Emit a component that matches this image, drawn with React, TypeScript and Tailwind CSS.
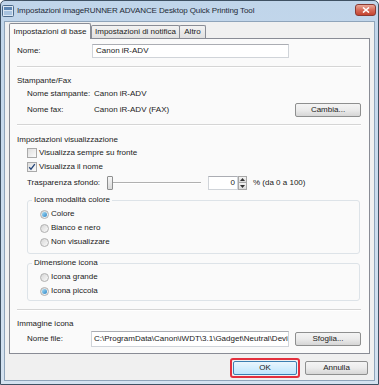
import React from "react";

const Sep = () => (
  <div className="h-[2px] border-t border-[#d5d5d5] border-b border-b-white" />
);

const Btn = ({ label, w, primary }: { label: string; w: string; primary?: boolean }) => (
  <div
    className={`${w} h-[14px] flex items-center justify-center rounded-[2px] border ${
      primary
        ? "border-[#3c7fb1] bg-gradient-to-b from-[#eaf6fd] to-[#bee6fd]"
        : "border-[#8e8f8f] bg-gradient-to-b from-[#f4f4f4] via-[#ebebeb] to-[#d6d6d6]"
    }`}
  >
    {label}
  </div>
);

const Check = ({ checked, label }: { checked?: boolean; label: string }) => (
  <div className="h-[12px] flex items-center">
    <div className="w-[10px] h-[10px] border border-[#a9a9a9] bg-gradient-to-br from-[#dedede] to-[#fbfbfb] flex items-center justify-center">
      {checked && (
        <svg width="8" height="8" viewBox="0 0 8 8">
          <path d="M1.2 4.2 L3 6.2 L6.8 1.2" stroke="#25467a" strokeWidth="1.3" fill="none" />
        </svg>
      )}
    </div>
    <span className="ml-[2px]">{label}</span>
  </div>
);

const Radio = ({ checked, label }: { checked?: boolean; label: string }) => (
  <div className="h-[14px] flex items-center">
    <div className="w-[9px] h-[9px] rounded-full border border-[#b0b0b0] bg-gradient-to-br from-[#d6d6d6] to-[#fafafa] flex items-center justify-center">
      {checked && (
        <div className="w-[5px] h-[5px] rounded-full bg-gradient-to-br from-[#a6e0f8] to-[#2a86c6]" />
      )}
    </div>
    <span className="ml-[2px]">{label}</span>
  </div>
);

const Group = ({ title, className, children }: { title: string; className: string; children: React.ReactNode }) => (
  <div className={`relative ml-[10px] mr-[1px] border border-[#dde3e8] rounded-[3px] pl-[12px] ${className}`}>
    <span className="absolute -top-[6px] left-[4px] px-[2px] bg-[#fafafa] leading-[10px]">{title}</span>
    {children}
  </div>
);

export default function App() {
  return (
    <div className="w-[379px] h-[385px] bg-white font-['Liberation_Sans',Arial,sans-serif] text-[8px] leading-[10px] text-[#1a1a1a]">
      <div className="w-full h-full flex flex-col border border-[#3f5163] rounded-t-[5px] bg-gradient-to-b from-[#c0d5ea] to-[#d4e2f0]">
        {/* title bar */}
        <div className="h-[20px] flex items-center pl-[1px] pr-[2px]">
          <svg width="12" height="12" viewBox="0 0 12 12">
            <rect x="0.5" y="0.5" width="11" height="11" rx="1" fill="#dbe7f3" stroke="#4d6a89" />
            <rect x="2" y="2" width="8" height="3" fill="#5d86b3" />
            <rect x="2" y="6" width="8" height="4" fill="#a8c3df" />
          </svg>
          <span className="ml-[3px] text-[#1e2a36] tracking-[-0.1px]">
            Impostazioni imageRUNNER ADVANCE Desktop Quick Printing Tool
          </span>
          <div className="ml-auto self-start mt-[3px] w-[21px] h-[12px] rounded-[3px] border border-[#8b3a32] bg-gradient-to-b from-[#e9a899] via-[#d66a58] to-[#c4432f] flex items-center justify-center">
            <svg width="8" height="6" viewBox="0 0 8 6">
              <path d="M1 0.5 L7 5.5 M7 0.5 L1 5.5" stroke="white" strokeWidth="1.6" />
            </svg>
          </div>
        </div>

        {/* client area */}
        <div className="flex-1 mx-[3px] mb-[3px] border border-[#8fa4ba] bg-[#f0f0f0] flex flex-col pt-[1px] px-[4px]">
          {/* tabs */}
          <div className="h-[15px] flex items-end">
            <div className="relative z-10 w-[82px] h-[16px] -mb-[1px] border border-b-0 border-[#898c95] bg-[#fafafa] flex items-center justify-center rounded-t-[2px]">
              Impostazioni di base
            </div>
            <div className="w-[89px] h-[13px] border border-b-0 border-[#898c95] bg-gradient-to-b from-[#f2f2f2] to-[#e1e1e1] flex items-center justify-center rounded-t-[2px]">
              Impostazioni di notifica
            </div>
            <div className="w-[27px] -ml-[1px] h-[13px] border border-b-0 border-[#898c95] bg-gradient-to-b from-[#f2f2f2] to-[#e1e1e1] flex items-center justify-center rounded-t-[2px]">
              Altro
            </div>
          </div>

          {/* tab panel */}
          <div className="h-[316px] border border-[#898c95] bg-[#fafafa] pl-[7px] pr-[8px] flex flex-col">
            <div className="mt-[5px] h-[14px] flex items-center">
              <span className="w-[75px]">Nome:</span>
              <div className="w-[197px] h-[14px] border border-[#d0d4d9] border-t-[#abadb3] bg-white pl-[3px] flex items-center">
                Canon iR-ADV
              </div>
            </div>

            <div className="mt-[8px]"><Sep /></div>

            <div className="mt-[7px] h-[12px] flex items-center">Stampante/Fax</div>
            <div className="mt-[1px] h-[12px] flex items-center pl-[10px]">
              <span className="w-[67px]">Nome stampante:</span>
              <span>Canon iR-ADV</span>
            </div>
            <div className="mt-[3px] h-[14px] flex items-center pl-[10px]">
              <span className="w-[67px]">Nome fax:</span>
              <span>Canon iR-ADV (FAX)</span>
              <div className="ml-auto"><Btn label="Cambia..." w="w-[66px]" /></div>
            </div>

            <div className="mt-[7px]"><Sep /></div>

            <div className="mt-[8px] h-[12px] flex items-center">Impostazioni visualizzazione</div>
            <div className="mt-[1px] pl-[10px]"><Check label="Visualizza sempre su fronte" /></div>
            <div className="mt-[2px] pl-[10px]"><Check checked label="Visualizza il nome" /></div>

            <div className="h-[20px] flex items-center pl-[10px]">
              <span className="w-[78px]">Trasparenza sfondo:</span>
              <div className="w-[96px] h-[20px] flex items-center">
                <div className="ml-[2px] w-[6px] h-[14px] border border-[#8e8f8f] rounded-[1px] bg-gradient-to-b from-[#f6f6f6] to-[#dadada]" />
                <div className="flex-1 h-[2px] border-t border-[#b0b0b0] border-b border-b-white" />
              </div>
              <div className="ml-[7px] w-[30px] h-[14px] border border-[#d0d4d9] border-t-[#abadb3] bg-white flex items-center justify-end pr-[2px]">
                0
              </div>
              <div className="w-[9px] h-[14px] flex flex-col">
                <div className="h-[7px] border border-[#a8a8a8] bg-gradient-to-b from-[#f4f4f4] to-[#dcdcdc] flex items-center justify-center">
                  <svg width="5" height="3" viewBox="0 0 5 3"><path d="M0 3 L2.5 0 L5 3 Z" fill="#333" /></svg>
                </div>
                <div className="h-[7px] border border-t-0 border-[#a8a8a8] bg-gradient-to-b from-[#f4f4f4] to-[#dcdcdc] flex items-center justify-center">
                  <svg width="5" height="3" viewBox="0 0 5 3"><path d="M0 0 L2.5 3 L5 0 Z" fill="#333" /></svg>
                </div>
              </div>
              <span className="ml-[6px]">% (da 0 a 100)</span>
            </div>

            <Group title="Icona modalità colore" className="mt-[7px] h-[54px] pt-[6px]">
              <Radio checked label="Colore" />
              <Radio label="Bianco e nero" />
              <Radio label="Non visualizzare" />
            </Group>

            <Group title="Dimensione icona" className="mt-[9px] h-[38px] pt-[6px]">
              <Radio label="Icona grande" />
              <Radio checked label="Icona piccola" />
            </Group>

            <div className="mt-[8px]"><Sep /></div>

            <div className="mt-[7px] h-[12px] flex items-center">Immagine icona</div>
            <div className="mt-[1px] h-[16px] flex items-center pl-[10px]">
              <span className="w-[64px]">Nome file:</span>
              <div className="w-[198px] h-[16px] border border-[#d0d4d9] border-t-[#abadb3] bg-white pl-[2px] flex items-center overflow-hidden whitespace-nowrap">
                {"C:\\ProgramData\\Canon\\iWDT\\3.1\\Gadget\\Neutral\\Devi"}
              </div>
              <div className="ml-auto"><Btn label="Sfoglia..." w="w-[66px]" /></div>
            </div>
          </div>

          {/* buttons */}
          <div className="mt-[4px] h-[20px] flex items-center justify-end pr-[2px]">
            <div className="border-2 border-[#e3303d] rounded-[3px] p-[1px]">
              <Btn label="OK" w="w-[64px]" primary />
            </div>
            <div className="ml-[5px]"><Btn label="Annulla" w="w-[63px]" /></div>
          </div>
        </div>
      </div>
    </div>
  );
}
